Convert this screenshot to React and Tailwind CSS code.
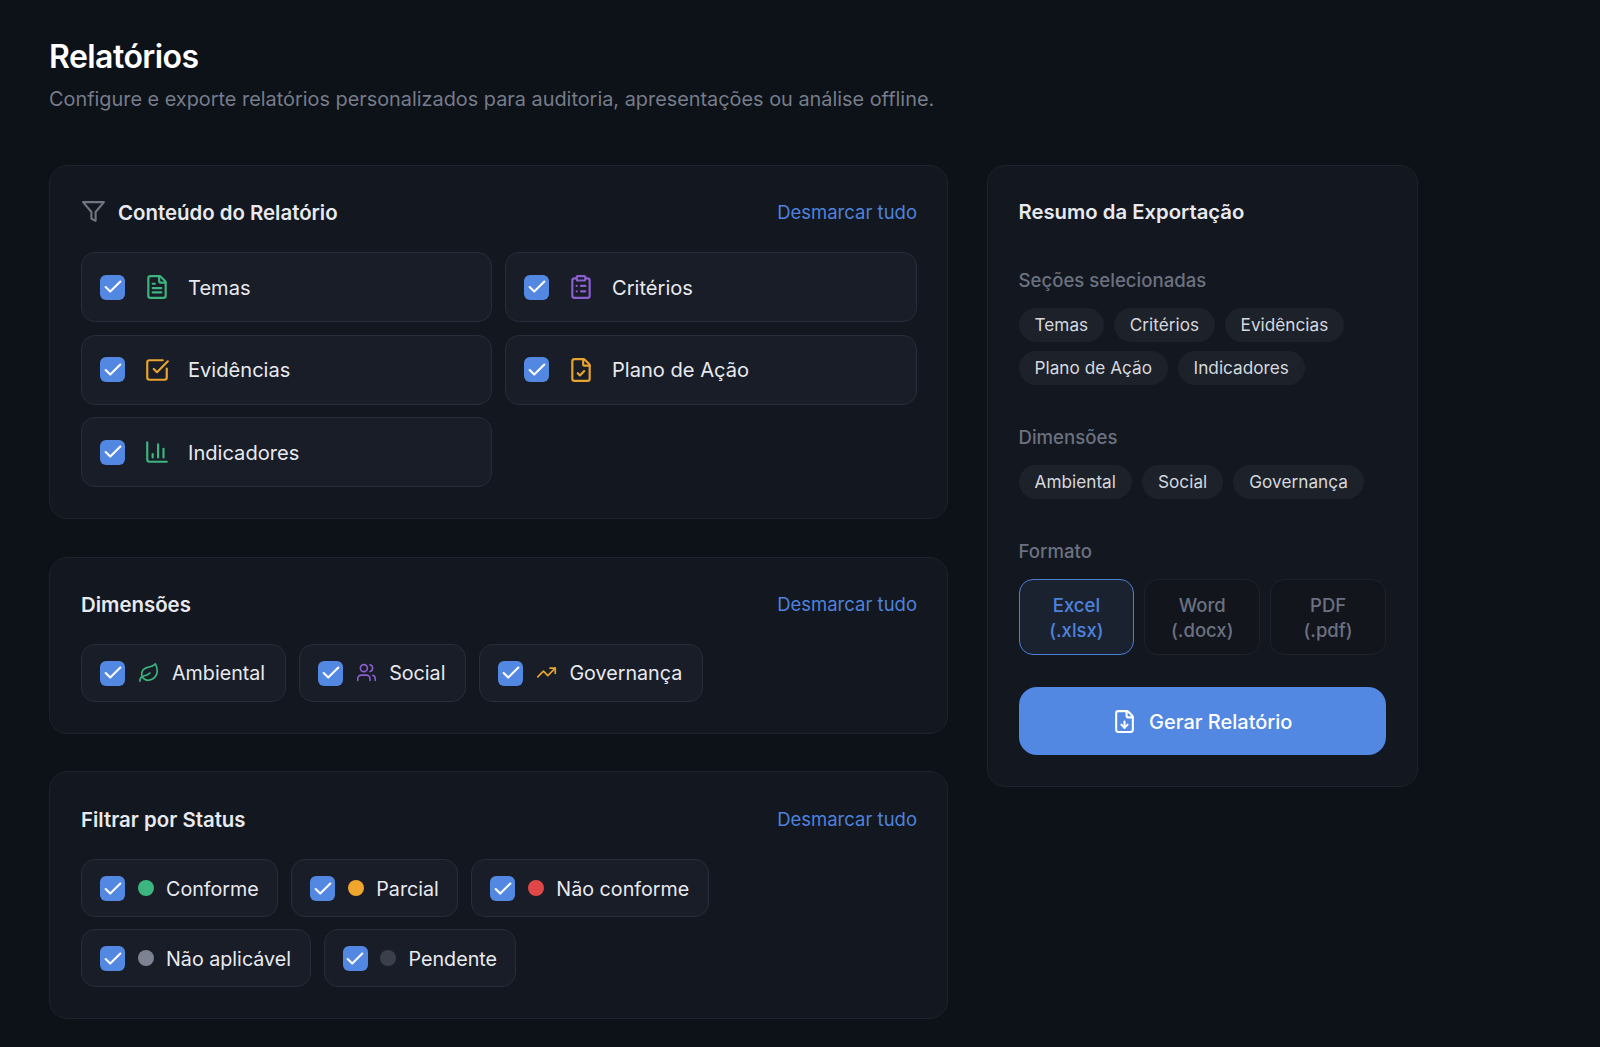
import React from "react";
import { FileText, ClipboardList, SquareCheckBig, FileCheck, ChartColumn, Leaf, Users, TrendingUp, FileDown, Check } from "lucide-react";

function Box() {
  return (
    <span className="flex h-[25px] w-[25px] shrink-0 items-center justify-center rounded-[6px] bg-[#5287e2]">
      <Check size={22} strokeWidth={2.3} className="text-white" />
    </span>
  );
}

function Funnel() {
  return (
    <svg width="25" height="25" viewBox="0 0 24 24" fill="none" stroke="currentColor" strokeWidth="2" strokeLinecap="round" strokeLinejoin="round" className="-mt-[4px] text-[#6f7583]">
      <polygon points="22 3 2 3 10 12.46 10 19 14 21 14 12.46 22 3" />
    </svg>
  );
}

function Section({ title, icon, children, tall }) {
  return (
    <section className="rounded-[18px] border border-[#1d222c] bg-[#13171f] pt-[31px] pr-[30px] pb-[31px] pl-[31px]">
      <div className={tall ? "mb-[23px] flex h-[33px] items-center justify-between" : "mb-[23px] flex h-[32px] items-center justify-between"}>
        <div className="flex items-center gap-[12px]">
          {icon}
          <h2 className="text-[20.4px] leading-[28px] font-semibold text-[#e8eaef]">{title}</h2>
        </div>
        <button className="pb-[2px] text-[18.5px] leading-[28px] text-[#4e82dc]">Desmarcar tudo</button>
      </div>
      {children}
    </section>
  );
}

function BigItem({ Icon, color, label }) {
  return (
    <label className="flex h-[70px] items-center gap-[18.5px] rounded-[14px] border border-[#272d3b] bg-[#191d28] px-[18px]">
      <Box />
      <Icon size={26} strokeWidth={2} className={color} />
      <span className="pt-[2px] text-[20.1px] text-[#e8eaef]">{label}</span>
    </label>
  );
}

function Pill({ children, label, wide }) {
  return (
    <label className={wide
      ? "flex h-[58px] items-center gap-[12.5px] rounded-[14px] border border-[#272d3b] bg-[#191d28] pr-[20px] pl-[18px]"
      : "flex h-[58px] items-center gap-[12.5px] rounded-[14px] border border-[#272d3b] bg-[#191d28] pr-[18.5px] pl-[18px]"}>
      <span className="pt-[1px]"><Box /></span>
      {children}
      <span className="pt-[3px] text-[19.7px] text-[#e8eaef]">{label}</span>
    </label>
  );
}

function Tag({ label }) {
  return <span className="flex h-[34px] items-center rounded-full bg-[#1d2129] px-[16px] text-[17.2px] tracking-[0.02px] text-[#d5d8df]">{label}</span>;
}

function Label({ children }) {
  return <div className="mb-[16px] text-[18.6px] leading-[24px] font-medium text-[#6b7180]">{children}</div>;
}

function Fmt({ a, b, active }) {
  return (
    <button className={active
      ? "flex h-[76px] flex-col items-center justify-center rounded-[14px] border border-[#4d7fd1] bg-[#1a2230] pt-[1px] text-[18.5px] leading-[25px] font-medium text-[#4e82dc]"
      : "flex h-[76px] flex-col items-center justify-center rounded-[14px] border border-[#1d222c] bg-[#12151c] pt-[1px] text-[18.5px] leading-[25px] font-medium text-[#6b7180]"}>
      <span>{a}</span>
      <span>{b}</span>
    </button>
  );
}

export default function App() {
  return (
    <div className="min-h-[1047px] bg-[#0d1118] pl-[49px] pt-[37px] font-['Inter',sans-serif]">
      <h1 className="text-[32px] leading-[40px] font-semibold tracking-[-0.55px] text-white">Relatórios</h1>
      <p className="mt-[3px] text-[19.87px] leading-[38px] text-[#767c8a]">Configure e exporte relatórios personalizados para auditoria, apresentações ou análise offline.</p>
      <div className="mt-[47px] grid w-[1369px] grid-cols-[899px_431px] items-start gap-[39px]">
        <div className="flex flex-col gap-[37.5px]">
          <Section title="Conteúdo do Relatório" icon={<Funnel />}>
            <div className="grid grid-cols-[411px_1fr] gap-x-[13px] gap-y-[12.5px]">
              <BigItem Icon={FileText} color="text-[#3cb57f]" label="Temas" />
              <BigItem Icon={ClipboardList} color="text-[#8b5fd0]" label="Critérios" />
              <BigItem Icon={SquareCheckBig} color="text-[#e9a42f]" label="Evidências" />
              <BigItem Icon={FileCheck} color="text-[#e9a42f]" label="Plano de Ação" />
              <BigItem Icon={ChartColumn} color="text-[#3cb57f]" label="Indicadores" />
            </div>
          </Section>
          <Section title="Dimensões">
            <div className="flex flex-wrap gap-[13px]">
              <Pill wide label="Ambiental"><Leaf size={22} strokeWidth={1.8} className="text-[#3cb57f]" /></Pill>
              <Pill wide label="Social"><Users size={21} strokeWidth={1.8} className="text-[#8b5fd0]" /></Pill>
              <Pill wide label="Governança"><TrendingUp size={21} strokeWidth={1.9} className="text-[#e9a42f]" /></Pill>
            </div>
          </Section>
          <Section tall title="Filtrar por Status">
            <div className="flex flex-wrap gap-x-[13px] gap-y-[12px]">
              <Pill label="Conforme"><span className="h-[16px] w-[16px] rounded-full bg-[#3cb57f]" /></Pill>
              <Pill label="Parcial"><span className="h-[16px] w-[16px] rounded-full bg-[#f0a52d]" /></Pill>
              <Pill label="Não conforme"><span className="h-[16px] w-[16px] rounded-full bg-[#e04848]" /></Pill>
              <Pill label="Não aplicável"><span className="h-[16px] w-[16px] rounded-full bg-[#7d8292]" /></Pill>
              <Pill label="Pendente"><span className="h-[16px] w-[16px] rounded-full bg-[#3a3f4b]" /></Pill>
            </div>
          </Section>
        </div>
        <aside className="rounded-[18px] border border-[#1d222c] bg-[#13171f] py-[31px] pr-[31px] pl-[30.5px]">
          <h2 className="mb-[41px] text-[20.3px] leading-[30px] font-semibold text-[#e8eaef]">Resumo da Exportação</h2>
          <Label>Seções selecionadas</Label>
          <div className="mb-[40px] flex flex-wrap gap-x-[9.5px] gap-y-[9px]">
            {["Temas", "Critérios", "Evidências", "Plano de Ação", "Indicadores"].map((t) => <Tag key={t} label={t} />)}
          </div>
          <Label>Dimensões</Label>
          <div className="mb-[40px] flex flex-wrap gap-[10px]">
            {["Ambiental", "Social", "Governança"].map((t) => <Tag key={t} label={t} />)}
          </div>
          <Label>Formato</Label>
          <div className="grid grid-cols-3 gap-[10px]">
            <Fmt a="Excel" b="(.xlsx)" active />
            <Fmt a="Word" b="(.docx)" />
            <Fmt a="PDF" b="(.pdf)" />
          </div>
          <button className="mt-[32px] flex h-[68px] w-full items-center justify-center gap-[12px] rounded-[18px] bg-[#5287e2] text-[20px] font-medium text-white">
            <FileDown size={25} strokeWidth={2} />
            <span className="pt-[1px]">Gerar Relatório</span>
          </button>
        </aside>
      </div>
    </div>
  );
}
